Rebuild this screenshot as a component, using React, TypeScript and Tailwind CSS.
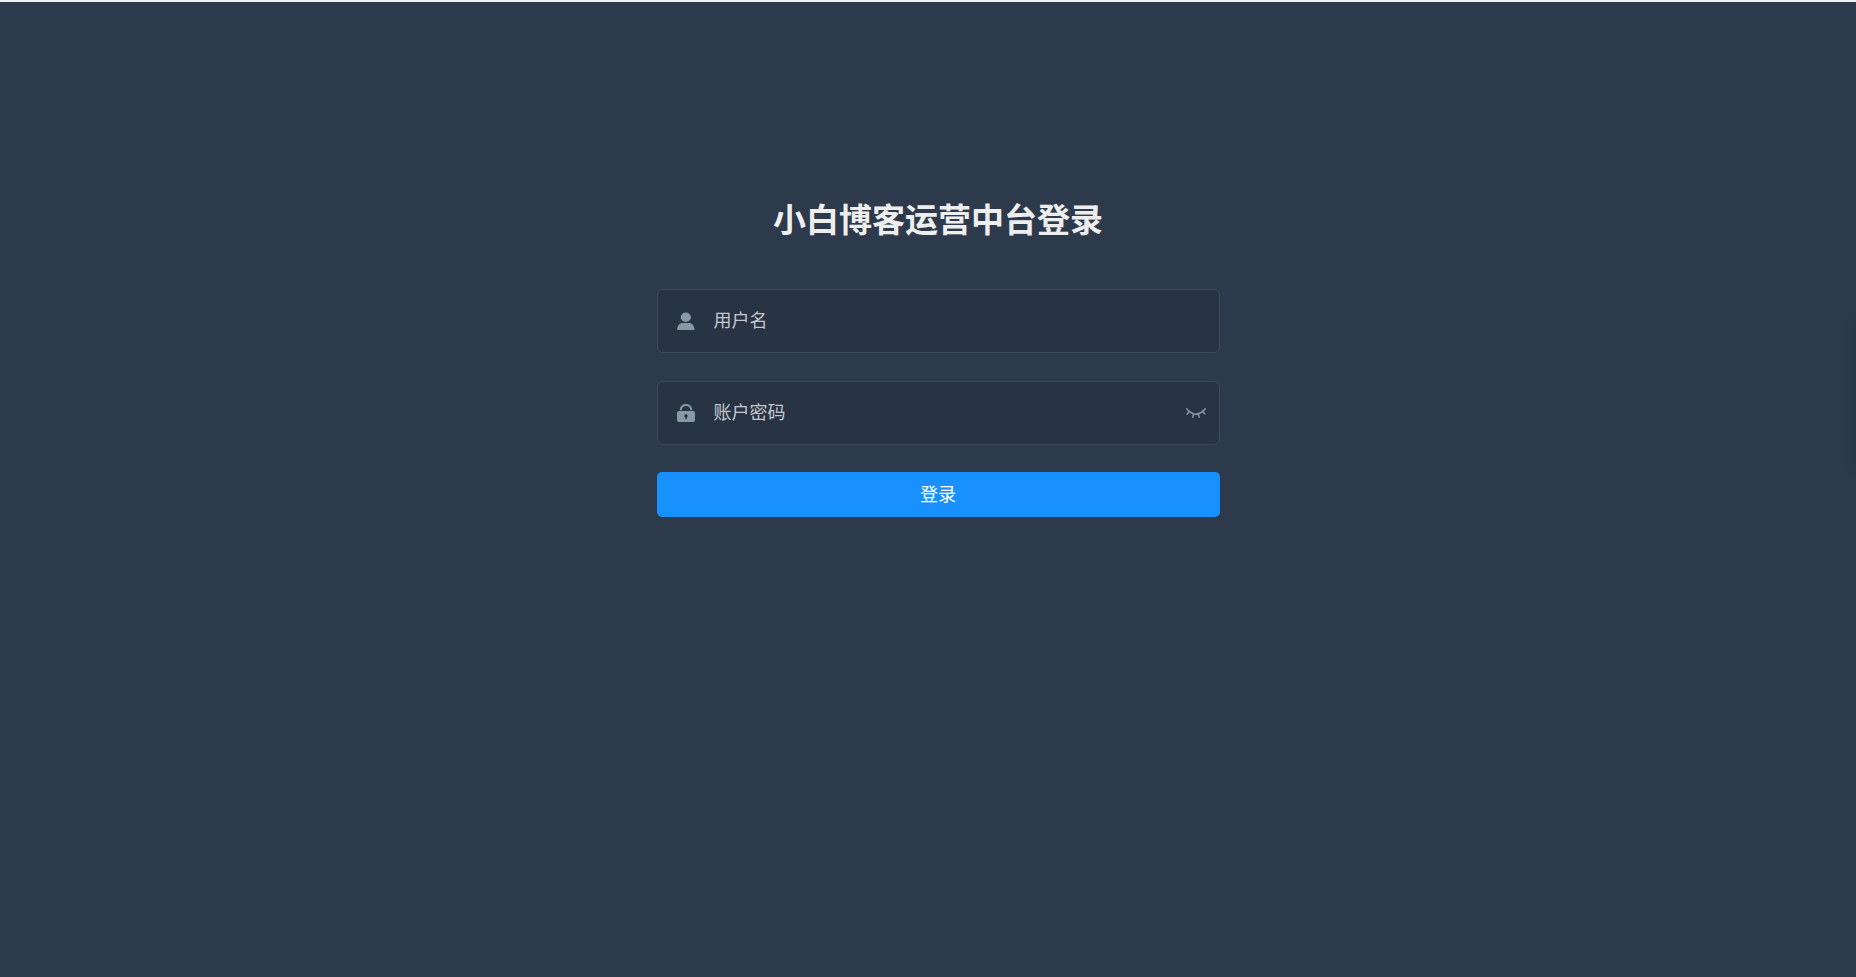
import { useState } from 'react';
import type { ReactNode } from 'react';

function UserIcon() {
  return (
    <svg viewBox="0 0 18 18" className="size-[18px]" fill="currentColor" aria-hidden="true">
      <ellipse cx="8.8" cy="5.2" rx="5.1" ry="4.7" />
      <path d="M.2 18C.2 13.500 2.600 11.100 5.800 11.100h6c3.200 0 5.600 2.400 5.600 6.900z" />
    </svg>
  );
}

function LockIcon() {
  return (
    <svg viewBox="0 0 18 18" className="size-[18px]" fill="currentColor" aria-hidden="true">
      <path
        fillRule="evenodd"
        d="M2 7h14q2 0 2 2v7q0 2-2 2H2q-2 0-2-2V9q0-2 2-2zM9 10.200a1.700 1.700 0 0 0-.7 3.250V15.300h1.400v-1.850A1.700 1.700 0 0 0 9 10.200z"
      />
      <path d="M3.800 6.200V5.800a5.200 4.900 0 0 1 10.400 0v.4" fill="none" stroke="currentColor" strokeWidth="2" />
    </svg>
  );
}

function ClosedEyeIcon() {
  return (
    <svg viewBox="0 0 128 64" className="h-[10px] w-5" fill="currentColor" aria-hidden="true">
      <path d="M127.072 7.994c1.37-2.208.914-5.152-.914-6.87-2.056-1.717-4.797-1.226-6.396.982-.229.245-25.586 32.382-55.74 32.382-29.24 0-55.74-32.382-55.968-32.627-1.6-1.963-4.57-2.208-6.397-.49C-.17 3.086-.399 6.275 1.2 8.238c.457.736 5.94 7.36 14.62 14.72L4.17 35.96c-1.828 1.963-1.6 5.152.228 6.87.457.98 1.6 1.471 2.742 1.471s2.284-.49 3.198-1.472l12.564-13.983c5.94 4.416 13.021 8.587 20.788 11.53l-4.797 17.418c-.685 2.699.686 5.397 3.198 6.133h1.37c2.057 0 3.884-1.472 4.341-3.68L52.6 42.83c3.655.736 7.538 1.227 11.422 1.227 3.883 0 7.767-.49 11.422-1.227l4.797 17.173c.457 2.208 2.513 3.68 4.34 3.68.457 0 .914 0 1.143-.246 2.513-.736 3.883-3.434 3.198-6.133l-4.797-17.172c7.767-2.944 14.848-7.114 20.788-11.53l12.336 13.738c.913.981 2.056 1.472 3.198 1.472 1.143 0 2.285-.49 3.199-1.472 1.828-1.963 1.828-4.906.228-6.87l-11.650-13.001c9.137-7.36 14.848-14.720 14.848-14.720z" />
    </svg>
  );
}

type FieldProps = {
  id: string;
  label: string;
  type: string;
  icon: ReactNode;
  children?: ReactNode;
};

function Field({ id, label, type, icon, children }: FieldProps) {
  return (
    <div className="flex h-16 items-center rounded-md border border-[#3e4957] bg-[#283443] pr-[13px] pl-[19px] text-[#889aa4]">
      <label htmlFor={id} aria-label={label} className="mr-[19px]">
        {icon}
      </label>
      <input
        id={id}
        type={type}
        placeholder={label}
        className="h-full min-w-0 flex-1 bg-transparent text-lg text-white outline-none placeholder:text-[#c3c8d0]"
      />
      {children}
    </div>
  );
}

export default function App() {
  const [visible, setVisible] = useState(false);

  return (
    <main className="relative min-h-screen overflow-hidden border-t-2 border-[#eef1f4] bg-[#2d3a4b] pt-[196px] pl-5 font-['Liberation_Sans','Noto_Sans_CJK_SC',sans-serif]">
      <form className="mx-auto flex max-w-[563px] flex-col" onSubmit={(e) => e.preventDefault()}>
        <h1 className="mb-[46px] text-center text-[33px] leading-[45px] font-bold text-[#eeeeee]">小白博客运营中台登录</h1>
        <div className="mb-[27px] flex flex-col gap-7">
          <Field id="username" label="用户名" type="text" icon={<UserIcon />} />
          <Field id="password" label="账户密码" type={visible ? 'text' : 'password'} icon={<LockIcon />}>
            <button type="button" aria-label="显示密码" onClick={() => setVisible(!visible)}>
              <ClosedEyeIcon />
            </button>
          </Field>
        </div>
        <button type="submit" className="h-[45px] rounded-[5px] bg-[#1890ff] text-lg text-white">
          登录
        </button>
      </form>
      <div className="absolute top-[320px] -right-1 h-[144px] w-1 shadow-[0_0_16px_rgba(0,0,0,0.2)]" />
    </main>
  );
}
